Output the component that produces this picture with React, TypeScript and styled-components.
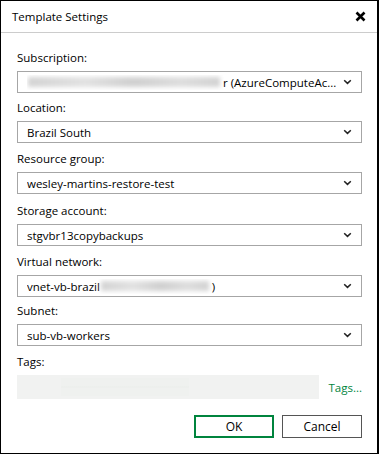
import React from 'react';
import styled, { createGlobalStyle } from 'styled-components';

const GlobalStyle = createGlobalStyle`
    html, body {
        margin: 0;
        padding: 0;
        background: #ffffff;
    }
    body {
        font-family: "Open Sans", "Noto Sans", sans-serif;
        font-size: 11.5px;
        color: #000000;
    }
`;

const Dialog = styled.div`
    box-sizing: border-box;
    width: 379px;
    height: 454px;
    border: 1px solid #000000;
    border-right-width: 2px;
    display: flex;
    flex-direction: column;
    background: #ffffff;
`;

const Header = styled.header`
    height: 31px;
    flex: none;
    display: flex;
    align-items: center;
    justify-content: space-between;
    padding: 0 10px 0 11px;
    border-bottom: 1px solid #cccccc;
`;

const Title = styled.h1`
    margin: 0;
    font-size: 11.5px;
    font-weight: normal;
`;

const CloseButton = styled.button`
    border: none;
    background: none;
    padding: 0;
    width: 14px;
    height: 14px;
    display: flex;
    align-items: center;
    justify-content: center;
    cursor: pointer;
`;

const Body = styled.div`
    flex: 1;
    display: flex;
    flex-direction: column;
    padding: 17px 15px 0 16px;
`;

const Field = styled.div<{ $gap?: number }>`
    display: flex;
    flex-direction: column;
    margin-bottom: ${(p) => p.$gap ?? 8}px;
`;

const Label = styled.label`
    line-height: 16px;
    height: 16px;
    margin-bottom: 5px;
`;

const Select = styled.div`
    box-sizing: border-box;
    height: 22px;
    border: 1px solid #a6a6a6;
    display: flex;
    align-items: center;
    padding: 0 9px 0 9px;
    gap: 2px;
`;

const Value = styled.span`
    flex: 1;
    display: flex;
    align-items: center;
    white-space: nowrap;
    overflow: hidden;
`;

const Redacted = styled.span<{ $width: number }>`
    display: inline-block;
    width: ${(p) => p.$width}px;
    height: 10px;
    margin: 0 3px 0 1px;
    background: linear-gradient(90deg, #d4d4d4, #e2e2e2 30%, #d0d0d0 55%, #dedede 80%, #d3d3d3);
    filter: blur(2px);
`;

const TagsRow = styled.div`
    display: flex;
    align-items: center;
    gap: 9px;
`;

const TagsBox = styled.div`
    flex: 1;
    height: 24px;
    background: #f1f2f1;
    display: flex;
    align-items: center;
    padding-left: 44px;
`;

const TagsSmudge = styled.div`
    width: 128px;
    height: 18px;
    background: linear-gradient(180deg, #eff1ef 45%, #eaedea 50%, #eff1ef 55%);
`;

const TagsLink = styled.a`
    color: #00843d;
    text-decoration: none;
    cursor: pointer;
`;

const Footer = styled.div`
    display: flex;
    justify-content: flex-end;
    gap: 8px;
    margin-top: 16px;
`;

const Button = styled.button<{ $primary?: boolean }>`
    box-sizing: border-box;
    width: 80px;
    height: 23px;
    font-family: inherit;
    font-size: 12px;
    color: #000000;
    background: #ffffff;
    border: ${(p) => (p.$primary ? '2px solid #00843d' : '1px solid #555555')};
    padding: 0;
    cursor: pointer;
`;

const Chevron = () => (
    <svg width="9" height="6" viewBox="0 0 9 6">
        <path d="M1.2 1.2 L4.5 4.4 L7.8 1.2" fill="none" stroke="#222" strokeWidth="1.5" />
    </svg>
);

const CloseIcon = () => (
    <svg width="11" height="11" viewBox="0 0 11 11">
        <path d="M1.5 1.5 L9.5 9.5 M9.5 1.5 L1.5 9.5" stroke="#000" strokeWidth="2.6" />
    </svg>
);

type FieldDef = { label: string; value: React.ReactNode; gap?: number };

const fields: FieldDef[] = [
    {
        label: 'Subscription:',
        value: <><Redacted $width={192} />r (AzureComputeAc...</>,
        gap: 7,
    },
    { label: 'Location:', value: 'Brazil South', gap: 8 },
    { label: 'Resource group:', value: 'wesley-martins-restore-test', gap: 9 },
    { label: 'Storage account:', value: 'stgvbr13copybackups', gap: 8 },
    {
        label: 'Virtual network:',
        value: <>vnet-vb-brazil <Redacted $width={108} />)</>,
        gap: 6,
    },
    { label: 'Subnet:', value: 'sub-vb-workers', gap: 8 },
];

export default function App() {
    return <>
        <GlobalStyle />
        <Dialog>
            <Header>
                <Title>Template Settings</Title>
                <CloseButton aria-label="close"><CloseIcon /></CloseButton>
            </Header>
            <Body>
                {fields.map((f) => (
                    <Field key={f.label} $gap={f.gap}>
                        <Label>{f.label}</Label>
                        <Select>
                            <Value>{f.value}</Value>
                            <Chevron />
                        </Select>
                    </Field>
                ))}
                <Field $gap={0}>
                    <Label>Tags:</Label>
                    <TagsRow>
                        <TagsBox><TagsSmudge /></TagsBox>
                        <TagsLink>Tags...</TagsLink>
                    </TagsRow>
                </Field>
                <Footer>
                    <Button $primary>OK</Button>
                    <Button>Cancel</Button>
                </Footer>
            </Body>
        </Dialog>
    </>;
}
